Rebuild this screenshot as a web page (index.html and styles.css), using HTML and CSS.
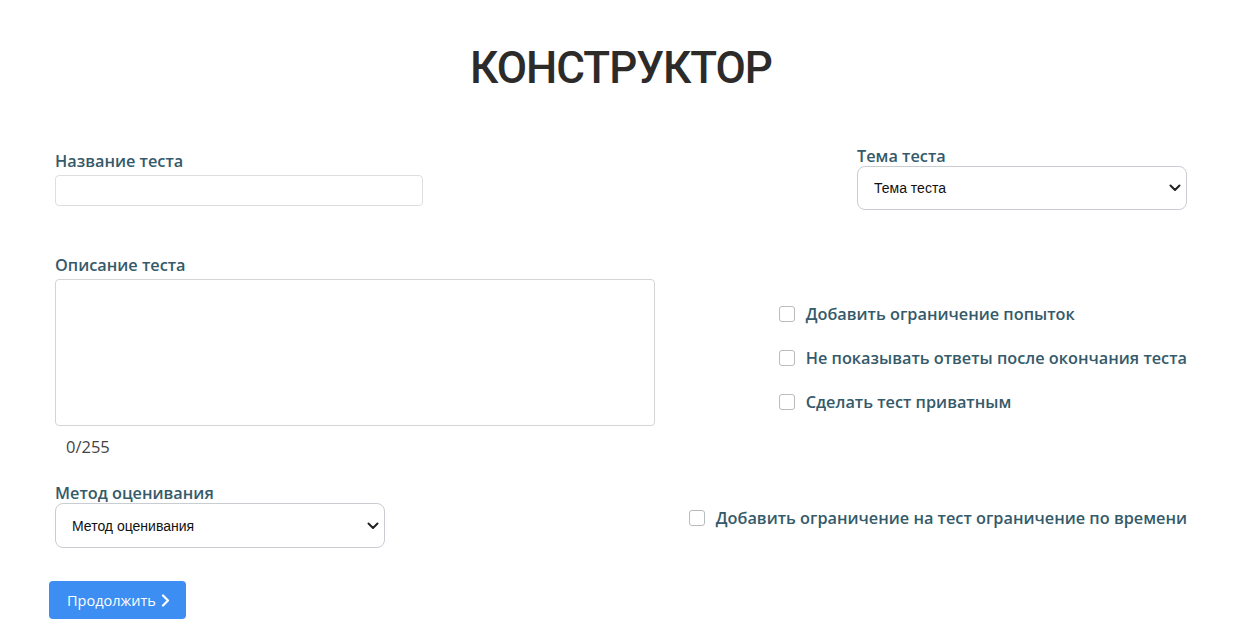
FILE: index.html
```html
<!DOCTYPE html>
<html lang="ru">
<head>
<meta charset="utf-8">
<title>Конструктор</title>
<link rel="stylesheet" href="styles.css">
</head>
<body>
<main class="page">
  <h1 class="title">КОНСТРУКТОР</h1>

  <div class="row row-top">
    <div class="field field-name">
      <label class="label" for="name">Название теста</label>
      <input class="input" id="name" type="text">
    </div>
    <div class="field field-theme">
      <label class="label" for="theme">Тема теста</label>
      <div class="select-wrap">
        <select class="select select-theme" id="theme">
          <option>Тема теста</option>
        </select>
        <svg class="arrow" width="12" height="8" viewBox="0 0 12 8"><path d="M1.5 1.5 L6 6 L10.5 1.5" fill="none" stroke="#222" stroke-width="2" stroke-linecap="round" stroke-linejoin="round"/></svg>
      </div>
    </div>
  </div>

  <div class="row row-desc">
    <div class="field field-desc">
      <label class="label" for="desc">Описание теста</label>
      <textarea class="textarea" id="desc"></textarea>
      <div class="counter">0/255</div>
    </div>
    <div class="checks">
      <label class="check"><input type="checkbox" class="box"><span>Добавить ограничение попыток</span></label>
      <label class="check"><input type="checkbox" class="box"><span>Не показывать ответы после окончания теста</span></label>
      <label class="check"><input type="checkbox" class="box"><span>Сделать тест приватным</span></label>
    </div>
  </div>

  <div class="row row-method">
    <div class="field field-method">
      <label class="label" for="method">Метод оценивания</label>
      <div class="select-wrap">
        <select class="select" id="method">
          <option>Метод оценивания</option>
        </select>
        <svg class="arrow" width="12" height="8" viewBox="0 0 12 8"><path d="M1.5 1.5 L6 6 L10.5 1.5" fill="none" stroke="#222" stroke-width="2" stroke-linecap="round" stroke-linejoin="round"/></svg>
      </div>
    </div>
    <label class="check check-time"><input type="checkbox" class="box"><span>Добавить ограничение на тест ограничение по времени</span></label>
  </div>

  <button class="btn" type="button">Продолжить
    <svg class="chev" width="9" height="13" viewBox="0 0 9 13"><path d="M2 1.5 L7 6.5 L2 11.5" fill="none" stroke="#fff" stroke-width="2.2" stroke-linecap="round" stroke-linejoin="round"/></svg>
  </button>
</main>
</body>
</html>
```

FILE: styles.css
```css
* { box-sizing: border-box; }
html, body { margin: 0; background: #fff; }
body {
  font-family: "Open Sans", "Noto Sans", sans-serif;
  color: #333;
}
.page {
  padding: 0 50px 0 55px;
}
.title {
  margin: 0;
  padding-top: 46px;
  text-align: center;
  font-family: Roboto, "Open Sans", sans-serif;
  font-size: 44px;
  font-weight: 500;
  letter-spacing: -1px;
  line-height: 1;
  color: #2c2b2a;
}
.row {
  display: flex;
  justify-content: space-between;
}
.field { display: flex; flex-direction: column; }
.label {
  font-size: 16.3px;
  font-weight: 600;
  color: #355a6a;
  line-height: 22px;
}
.row-top { margin-top: 55px; align-items: flex-start; }
.field-name { margin-top: 5px; }
.field-name .label { margin-bottom: 3px; }
.input {
  width: 368px;
  height: 31px;
  border: 1px solid #dcdfe2;
  border-radius: 4px;
  background: #fff;
}
.field-theme { margin-left: auto; }
.field-theme .label { margin-bottom: -1px; }
.select-wrap { position: relative; }
.select {
  appearance: none;
  -webkit-appearance: none;
  display: block;
  width: 330px;
  height: 45px;
  border: 1px solid #c9cdd1;
  border-radius: 8px;
  background: #fff;
  font-family: "Liberation Sans", Arial, sans-serif;
  font-size: 14px;
  color: #111;
  padding: 0 30px 0 16px;
}
.select-theme { height: 44px; }
.arrow {
  position: absolute;
  right: 6px;
  top: 50%;
  margin-top: -4px;
  pointer-events: none;
}
.row-desc { margin-top: 44px; align-items: flex-start; }
.field-desc .label { margin-bottom: 3px; }
.textarea {
  width: 600px;
  height: 147px;
  border: 1px solid #d2d5d8;
  border-radius: 4px;
  resize: none;
  background: #fff;
}
.counter {
  margin-top: 10px;
  padding-left: 11px;
  font-size: 16.5px;
  color: #444;
  line-height: 22px;
}
.checks {
  margin-top: 48px;
  display: flex;
  flex-direction: column;
  gap: 20px;
}
.check {
  display: flex;
  align-items: center;
  gap: 11px;
  font-size: 16.3px;
  font-weight: 600;
  color: #355a6a;
  line-height: 24px;
}
.box {
  appearance: none;
  -webkit-appearance: none;
  margin: 0;
  width: 16px;
  height: 16px;
  border: 1px solid #b9bcbf;
  border-radius: 3px;
  background: #fff;
  flex: none;
}
.row-method { margin-top: 24px; align-items: flex-start; }
.field-method .label { margin-bottom: -1px; }
.check-time { margin-top: 24px; }
.btn {
  margin: 33px 0 0 -6px;
  height: 38px;
  padding: 0 16px 0 18px;
  display: inline-flex;
  align-items: center;
  gap: 5px;
  border: none;
  border-radius: 4px;
  background: #3d8ef2;
  color: #fff;
  font-family: "Open Sans", "Noto Sans", sans-serif;
  font-size: 14.5px;
  font-weight: 500;
}
.chev { display: block; }
```
